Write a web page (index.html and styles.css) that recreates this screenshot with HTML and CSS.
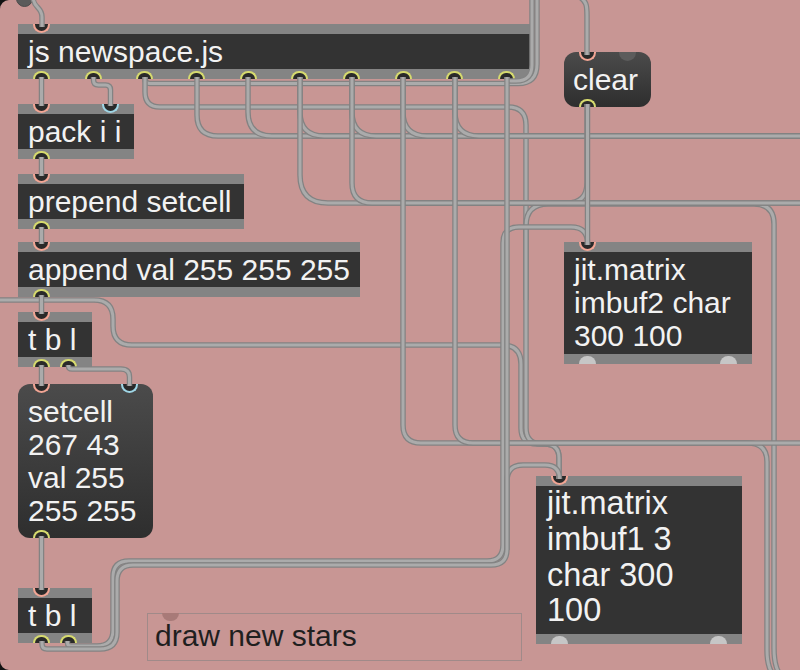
FILE: index.html
```html
<!DOCTYPE html>
<html>
<head>
<meta charset="utf-8">
<title>newspace patcher</title>
<link rel="stylesheet" href="styles.css">
</head>
<body>
<div class="patcher">

  <div class="obj js">
    <div class="bar"></div>
    <div class="body">js newspace.js</div>
    <div class="bar"></div>
    <div class="ports top"><span class="port in"></span></div>
    <div class="ports bottom">
      <span class="port out"></span><span class="port out"></span><span class="port out"></span><span class="port out"></span><span class="port out"></span>
      <span class="port out"></span><span class="port out"></span><span class="port out"></span><span class="port out"></span><span class="port out"></span>
    </div>
  </div>

  <div class="obj pack">
    <div class="bar"></div>
    <div class="body">pack i i</div>
    <div class="bar"></div>
    <div class="ports top"><span class="port in"></span><span class="port in cold"></span></div>
    <div class="ports bottom"><span class="port out"></span></div>
  </div>

  <div class="obj prepend">
    <div class="bar"></div>
    <div class="body">prepend setcell</div>
    <div class="bar"></div>
    <div class="ports top"><span class="port in"></span></div>
    <div class="ports bottom"><span class="port out"></span></div>
  </div>

  <div class="obj append">
    <div class="bar"></div>
    <div class="body">append val 255 255 255</div>
    <div class="bar"></div>
    <div class="ports top"><span class="port in"></span></div>
    <div class="ports bottom"><span class="port out"></span></div>
  </div>

  <div class="obj tbl1">
    <div class="bar"></div>
    <div class="body">t b l</div>
    <div class="bar"></div>
    <div class="ports top"><span class="port in"></span></div>
    <div class="ports bottom"><span class="port out"></span><span class="port out"></span></div>
  </div>

  <div class="msg setcell">
    <div class="text">setcell<br>267 43<br>val 255<br>255 255</div>
    <div class="ports top"><span class="port in"></span><span class="port in cold"></span></div>
    <div class="ports bottom"><span class="port out"></span></div>
  </div>

  <div class="obj tbl2">
    <div class="bar"></div>
    <div class="body">t b l</div>
    <div class="bar"></div>
    <div class="ports top"><span class="port in"></span></div>
    <div class="ports bottom"><span class="port out"></span><span class="port out"></span></div>
  </div>

  <div class="comment">
    <div class="text">draw new stars</div>
    <div class="ports top"><span class="port ghost"></span></div>
  </div>

  <div class="msg clear">
    <div class="text">clear</div>
    <div class="ports top"><span class="port in"></span><span class="port dim"></span></div>
    <div class="ports bottom"><span class="port out"></span></div>
  </div>

  <div class="obj imbuf2">
    <div class="bar"></div>
    <div class="body">jit.matrix<br>imbuf2 char<br>300 100</div>
    <div class="bar"></div>
    <div class="ports top"><span class="port in"></span></div>
    <div class="ports bottom"><span class="port jit"></span><span class="port jit"></span></div>
  </div>

  <div class="obj imbuf1">
    <div class="bar"></div>
    <div class="body">jit.matrix<br>imbuf1 3<br>char 300<br>100</div>
    <div class="bar"></div>
    <div class="ports top"><span class="port in"></span></div>
    <div class="ports bottom"><span class="port jit"></span><span class="port jit"></span></div>
  </div>

  <svg class="cords" width="800" height="670" viewBox="0 0 800 670">
    <defs>
      <path id="k0" d="M33,-4 C33,9 42,6 42,17 V27"/>
      <path id="kc" d="M578,-4 C587,1 587,6 587,16 V55"/>
      <path id="k1" d="M145,77 V79 Q145,83.5 150,83.5 H518 Q537,83.5 537,64 V-5"/>
      <path id="k2" d="M507,77 V78 Q507,81 511,81 H516 Q532,81 532,65 V-5"/>
      <path id="k14" d="M-5,300 H94 Q113,300 113,319 V326 Q113,345 132,345 H502 Q521,345 521,364 V428 Q521,444 537,444 H545 Q559,444 559,458 V479"/>
      <path id="k3" d="M145,77 V92 Q145,107 160,107 H508 Q526,107 526,125 V428 Q526,444 542,444 H545 Q559,444 559,458 V479"/>
      <path id="k4" d="M197,77 V115 Q197,136 218,136 H805"/>
      <path id="k5" d="M248,77 V112 Q248,136 272,136 H805"/>
      <path id="k6" d="M300,77 V112 Q300,136 324,136 H805"/>
      <path id="k7" d="M352,77 V112 Q352,136 376,136 H805"/>
      <path id="k8" d="M403,77 V112 Q403,136 427,136 H805"/>
      <path id="k9" d="M455,77 V112 Q455,136 479,136 H805"/>
      <path id="k13" d="M526,300 V226 Q526,204 548,204 H754 Q774,204 774,224 V648 C774,664 777,672 784,680"/>
      <path id="k12" d="M587,104 V183 Q587,203 567,203 H400"/>
      <path id="k10" d="M300,77 V175 Q300,203 328,203 H805"/>
      <path id="k11" d="M352,77 V183 Q352,203 372,203 H805"/>
      <path id="k15" d="M403,77 V425 Q403,443 421,443 H748 Q767,443 767,462 V650 C767,664 770,672 777,680"/>
      <path id="k16" d="M455,77 V425 Q455,443 473,443 H805"/>
      <path id="k18" d="M67.5,641 V643 Q67.5,646 71.5,646 H97 Q113,646 113,630 V577 Q113,561 129,561 H487 Q503,561 503,545 V243 Q503,227 519,227 H571 Q587.5,227 587.5,243 V245"/>
      <path id="k19" d="M42,641 V644 Q42,649 47,649 H100 Q117,649 117,632 V581 Q117,565 133,565 H491 Q507,565 507,549 V481 Q507,465 523,465 H545 Q559.5,465 559.5,479"/>
      <path id="k17" d="M507,77 V550"/>
      <path id="k20" d="M587.5,104 V245"/>
      <path id="k21" d="M41.5,77 V106"/>
      <path id="k22" d="M93.5,77 V80 Q93.5,85 98.5,85 H105.5 Q110.5,85 110.5,90 V106"/>
      <path id="k23" d="M41.5,157 V176"/>
      <path id="k24" d="M41.5,227 V244"/>
      <path id="k25" d="M41.5,295 V314"/>
      <path id="k26" d="M41.5,365 V386"/>
      <path id="k27" d="M68.5,365 V366 Q68.5,369 72,369 H121 Q129.5,369 129.5,377 V386"/>
      <path id="k28" d="M41.5,536 V590"/>
    </defs>

    <circle class="blob" cx="24.5" cy="-1.5" r="8"/>

    <use href="#k0" class="o"/><use href="#k0" class="i"/>
    <use href="#kc" class="o"/><use href="#kc" class="i"/>
    <use href="#k1" class="o"/><use href="#k1" class="i"/>
    <use href="#k2" class="o"/><use href="#k2" class="i"/>
    <use href="#k14" class="o"/><use href="#k14" class="i"/>
    <use href="#k3" class="o"/><use href="#k3" class="i"/>
    <use href="#k4" class="o"/><use href="#k4" class="i"/>
    <use href="#k5" class="o"/><use href="#k5" class="i"/>
    <use href="#k6" class="o"/><use href="#k6" class="i"/>
    <use href="#k7" class="o"/><use href="#k7" class="i"/>
    <use href="#k8" class="o"/><use href="#k8" class="i"/>
    <use href="#k9" class="o"/><use href="#k9" class="i"/>
    <use href="#k13" class="o"/><use href="#k13" class="i"/>
    <use href="#k12" class="o"/><use href="#k12" class="i"/>
    <use href="#k10" class="o"/><use href="#k10" class="i"/>
    <use href="#k11" class="o"/><use href="#k11" class="i"/>
    <use href="#k15" class="o"/><use href="#k15" class="i"/>
    <use href="#k16" class="o"/><use href="#k16" class="i"/>
    <use href="#k18" class="o"/><use href="#k18" class="i"/>
    <use href="#k19" class="o"/><use href="#k19" class="i"/>
    <use href="#k17" class="o"/><use href="#k17" class="i"/>
    <use href="#k20" class="o"/><use href="#k20" class="i"/>
    <use href="#k21" class="o"/><use href="#k21" class="i"/>
    <use href="#k22" class="o"/><use href="#k22" class="i"/>
    <use href="#k23" class="o"/><use href="#k23" class="i"/>
    <use href="#k24" class="o"/><use href="#k24" class="i"/>
    <use href="#k25" class="o"/><use href="#k25" class="i"/>
    <use href="#k26" class="o"/><use href="#k26" class="i"/>
    <use href="#k27" class="o"/><use href="#k27" class="i"/>
    <use href="#k28" class="o"/><use href="#k28" class="i"/>

    <path class="corner" d="M0,0 H9 A9,9 0 0 0 0,9 Z"/>
    <path class="corner" d="M0,670 V661 A9,9 0 0 0 9,670 Z"/>
  </svg>
</div>
</body>
</html>
```

FILE: styles.css
```css
html, body {
  margin: 0;
  padding: 0;
  background: #c89694;
}

.patcher {
  position: relative;
  width: 800px;
  height: 670px;
  overflow: hidden;
  background: #c89694;
  font-family: "Liberation Sans", Arial, sans-serif;
  font-size: 30px;
  color: #f2f2f2;
}

/* ---------- object boxes ---------- */
.obj {
  position: absolute;
  display: flex;
  flex-direction: column;
  background: #333333;
}

.obj .bar {
  height: 10px;
  background: #848484;
  flex: none;
}

.obj .body {
  padding: 1px 10px 1px 10px;
  line-height: 33px;
  white-space: nowrap;
}

.js      { left: 18px;  top: 24px;  width: 512px; }
.pack    { left: 18px;  top: 104px; width: 116px; }
.prepend { left: 18px;  top: 174px; width: 226px; }
.append  { left: 18px;  top: 242px; width: 342px; }
.tbl1    { left: 18px;  top: 312px; width: 74px; }
.tbl2    { left: 18px;  top: 588px; width: 74px; }
.imbuf2  { left: 564px; top: 242px; width: 188px; }
.imbuf1  { left: 536px; top: 476px; width: 206px; }

.imbuf1 .body {
  font-size: 32.5px;
  line-height: 35.75px;
  height: 148px;
  box-sizing: border-box;
  padding: 0 10px 0 11px;
}

.imbuf2 .body {
  padding-bottom: 2px;
}

/* ---------- message boxes ---------- */
.msg {
  position: absolute;
  box-sizing: border-box;
  border-radius: 12px;
  background: linear-gradient(#4b4b4b, #2e2e2e);
}

.msg .text {
  line-height: 33px;
  white-space: nowrap;
}

.setcell {
  left: 18px;
  top: 384px;
  width: 135px;
  height: 154px;
  padding: 11px 10px;
}

.clear {
  left: 564px;
  top: 52px;
  width: 87px;
  height: 55px;
  padding: 11px 9px;
}

/* ---------- comment ---------- */
.comment {
  position: absolute;
  left: 147px;
  top: 613px;
  width: 375px;
  height: 48px;
  box-sizing: border-box;
  border: 1.5px solid #a08a89;
  padding: 5px 7px;
  color: #1f1f1f;
}

.comment .text {
  line-height: 33px;
  white-space: nowrap;
}

.comment .ports.top {
  top: -1.5px;
  padding: 0 14px;
}

/* ---------- inlets / outlets ---------- */
.ports {
  position: absolute;
  left: 0;
  right: 0;
  display: flex;
  justify-content: space-between;
  padding: 0 15px;
  pointer-events: none;
}

.ports.top { top: 0; }
.ports.bottom { bottom: 0; }

.port {
  display: block;
  box-sizing: border-box;
  width: 17px;
  height: 8.5px;
  background: #2a2a2a;
}

.port.in {
  border: 2.2px solid #f2a594;
  border-top: 0;
  border-radius: 0 0 8.5px 8.5px;
}

.port.in.cold {
  border-color: #9fd6e6;
}

.port.out {
  border: 2.2px solid #d6da6e;
  border-bottom: 0;
  border-radius: 8.5px 8.5px 0 0;
}

.port.jit {
  background: #c6c6c6;
  border-radius: 8.5px 8.5px 0 0;
}

.port.dim {
  background: #5c5c5c;
  border-radius: 0 0 8.5px 8.5px;
}

.port.ghost {
  background: #a87a78;
  border-radius: 0 0 8.5px 8.5px;
}

/* ---------- patch cords ---------- */
.cords {
  position: absolute;
  left: 0;
  top: 0;
  pointer-events: none;
}

.cords use {
  fill: none;
  stroke-linecap: butt;
  stroke-linejoin: round;
}

.cords use.o {
  stroke: #838383;
  stroke-width: 5.5px;
}

.cords use.i {
  stroke: #ababab;
  stroke-width: 3px;
}

.cords .blob {
  fill: #5b5b5b;
  stroke: #4b4b4b;
  stroke-width: 1px;
}

.cords .corner {
  fill: #121212;
}
```
